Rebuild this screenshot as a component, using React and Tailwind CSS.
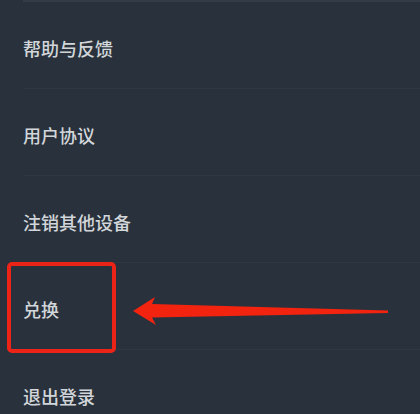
import React from "react";

const items = ["帮助与反馈", "用户协议", "注销其他设备", "兑换", "退出登录"];

export default function App() {
  return (
    <div
      className="relative w-[420px] h-[414px] overflow-hidden bg-[#29323c]"
      style={{ fontFamily: '"Noto Sans CJK SC", "Noto Sans", sans-serif' }}
    >
      <div className="h-[2px] ml-[23px] bg-[#343d47]" />
      <div className="flex flex-col">
        {items.map((t, i) => (
          <div
            key={t}
            className={
              "ml-[23px] h-[87px] flex items-center pt-[5px] " +
              (i < items.length - 1 ? "border-b border-[#2f3842]" : "")
            }
          >
            <span className="text-[18px] leading-none font-medium text-[#d2d6da]">{t}</span>
          </div>
        ))}
      </div>

      <div className="absolute left-[7px] top-[262px] w-[109px] h-[91px] border-[4px] border-[#ec2418] rounded-[5px]" />

      <svg
        className="absolute left-0 top-0"
        width="420"
        height="414"
        viewBox="0 0 420 414"
      >
        <polygon
          points="133,311 155,297 152,304 388,310.5 388,313 152,317.5 156,325"
          fill="#f2230f"
        />
      </svg>
    </div>
  );
}
